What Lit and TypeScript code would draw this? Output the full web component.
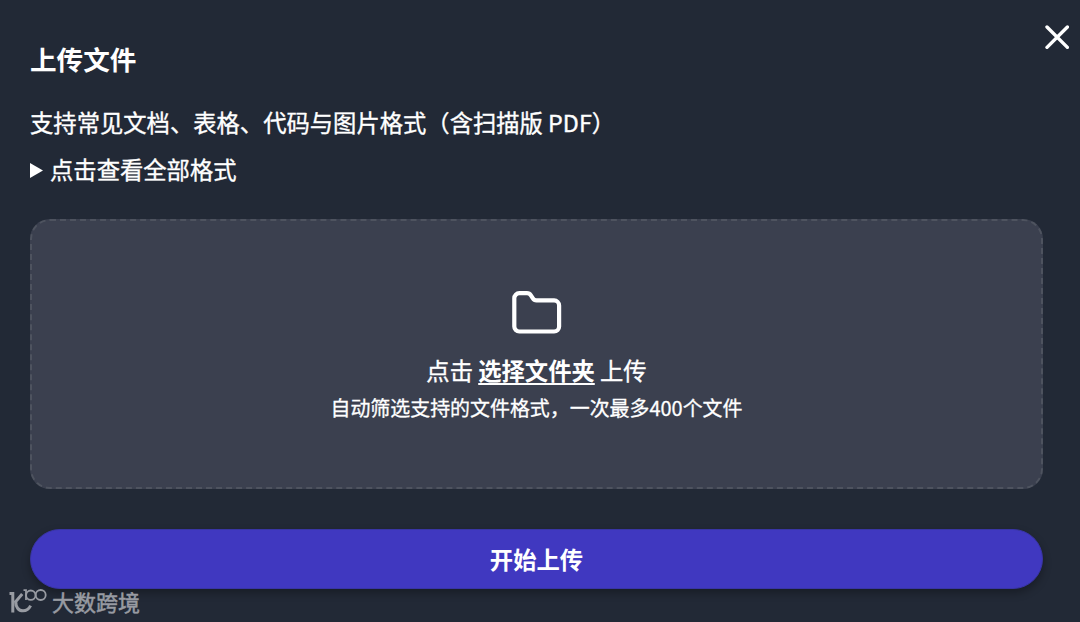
import { LitElement, html, css, svg } from 'lit';
import { customElement, property } from 'lit/decorators.js';

// Stroke icons used by the dialog
const closeIcon = svg`<path d="M2 2 L22.4 22.4 M22.4 2 L2 22.4" />`;
const folderIcon = svg`
  <path d="M2.3 7.2 a5 5 0 0 1 5 -5 h7.6 q2.6 0 4 2.2 l1.8 2.8 q1.4 2.2 3.8 2.2 h17.6 a5 5 0 0 1 5 5 v21.1 a5 5 0 0 1 -5 5 h-34.8 a5 5 0 0 1 -5 -5 z" />
`;

/**
 * DropZone Component - dashed area used to pick a folder
 *
 * Props:
 * - hint: Small text below the main line
 */
@customElement('drop-zone')
export class DropZone extends LitElement {
  @property() hint = '';

  static styles = css`
    :host {
      box-sizing: border-box;
      display: flex;
      flex-direction: column;
      align-items: center;
      height: 270px;
      padding-top: 70px;
      background: #3b404f;
      border: 2px dashed #4e535f;
      border-radius: 20px;
    }
    .folder {
      width: 50px;
      height: 43px;
      fill: none;
      stroke: #fff;
      stroke-width: 4.2;
      stroke-linejoin: round;
    }
    .line {
      margin-top: 19px;
      line-height: 35px;
      -webkit-text-stroke: 0.35px #fff;
    }
    .link {
      font-weight: 700;
      text-decoration: underline;
      text-decoration-thickness: 2px;
      text-underline-offset: 3px;
      -webkit-text-stroke: 0;
    }
    .hint {
      margin-top: 5px;
      font-size: 19.95px;
      line-height: 30px;
      -webkit-text-stroke: 0.3px #fff;
    }
  `;

  render() {
    return html`
      <svg class="folder" viewBox="0 0 50 43">${folderIcon}</svg>
      <div class="line">点击 <span class="link">选择文件夹</span> 上传</div>
      <div class="hint">${this.hint}</div>
    `;
  }
}

/**
 * BrandMark Component - logo and name in the lower left corner
 */
@customElement('brand-mark')
export class BrandMark extends LitElement {
  static styles = css`
    :host {
      display: flex;
      align-items: center;
      gap: 5px;
      color: #989ba2;
      font-size: 22px;
      line-height: 30px;
      white-space: nowrap;
      -webkit-text-stroke: 0.5px #989ba2;
    }
    .logo {
      width: 38px;
      height: 26px;
      fill: none;
      stroke: currentColor;
    }
    .thick {
      stroke-width: 3;
    }
    .thin {
      stroke-width: 1.8;
    }
  `;

  render() {
    return html`
      <svg class="logo" viewBox="0 0 38 26">
        <path class="thick" d="M0.5 5.4 H3.8 V24.5 M13.2 6 L6.8 13.5 C6.6 19 9.5 22.8 14 22.8 Q19 22.8 21.6 17.6" />
        <path class="thin" d="M14.5 2.2 H17 V12" />
        <circle class="thin" cx="21.8" cy="7.2" r="4.7" />
        <circle class="thin" cx="31.7" cy="7" r="5" />
      </svg>
      <span>大数跨境</span>
    `;
  }
}

/**
 * AppRoot Component - upload dialog
 */
@customElement('app-root')
export class AppRoot extends LitElement {
  static styles = css`
    :host {
      position: relative;
      box-sizing: border-box;
      display: flex;
      flex-direction: column;
      height: 622px;
      padding: 39px 37px 0 30px;
      overflow: hidden;
      background: #222936;
      color: #fff;
      font-family: 'Noto Sans CJK SC', sans-serif;
      font-size: 23.32px;
      font-weight: 400;
    }
    .title {
      margin: 0;
      font-size: 26.6px;
      font-weight: 700;
      line-height: 40px;
    }
    .close {
      position: absolute;
      top: 25px;
      right: 11px;
      display: flex;
      padding: 0;
      border: 0;
      background: none;
    }
    .close svg {
      width: 24.4px;
      height: 24.4px;
      fill: none;
      stroke: #fff;
      stroke-width: 3.4;
      stroke-linecap: round;
    }
    .desc {
      margin: 26px 0 0;
      line-height: 35px;
      -webkit-text-stroke: 0.35px #fff;
    }
    .formats {
      display: flex;
      align-items: center;
      gap: 7px;
      margin-top: 12px;
      line-height: 35px;
      -webkit-text-stroke: 0.35px #fff;
    }
    .marker {
      width: 13px;
      height: 15px;
      margin-top: 2px;
      background: #fff;
      clip-path: polygon(0 0, 100% 50%, 0 100%);
    }
    drop-zone {
      margin-top: 32px;
    }
    .submit {
      height: 60px;
      margin-top: 40px;
      padding: 0;
      border: 1px solid #3935a5;
      border-radius: 30px;
      background: #4038c0;
      box-shadow: 0 4px 8px rgba(0, 0, 0, 0.3);
      color: #fff;
      font: inherit;
      font-weight: 700;
    }
    brand-mark {
      position: absolute;
      left: 9px;
      bottom: 6px;
    }
  `;

  render() {
    return html`
      <h1 class="title">上传文件</h1>
      <button class="close" aria-label="关闭">
        <svg viewBox="0 0 24.4 24.4">${closeIcon}</svg>
      </button>
      <p class="desc">支持常见文档、表格、代码与图片格式（含扫描版 PDF）</p>
      <div class="formats"><span class="marker"></span>点击查看全部格式</div>
      <drop-zone hint="自动筛选支持的文件格式，一次最多400个文件"></drop-zone>
      <button class="submit">开始上传</button>
      <brand-mark></brand-mark>
    `;
  }
}
